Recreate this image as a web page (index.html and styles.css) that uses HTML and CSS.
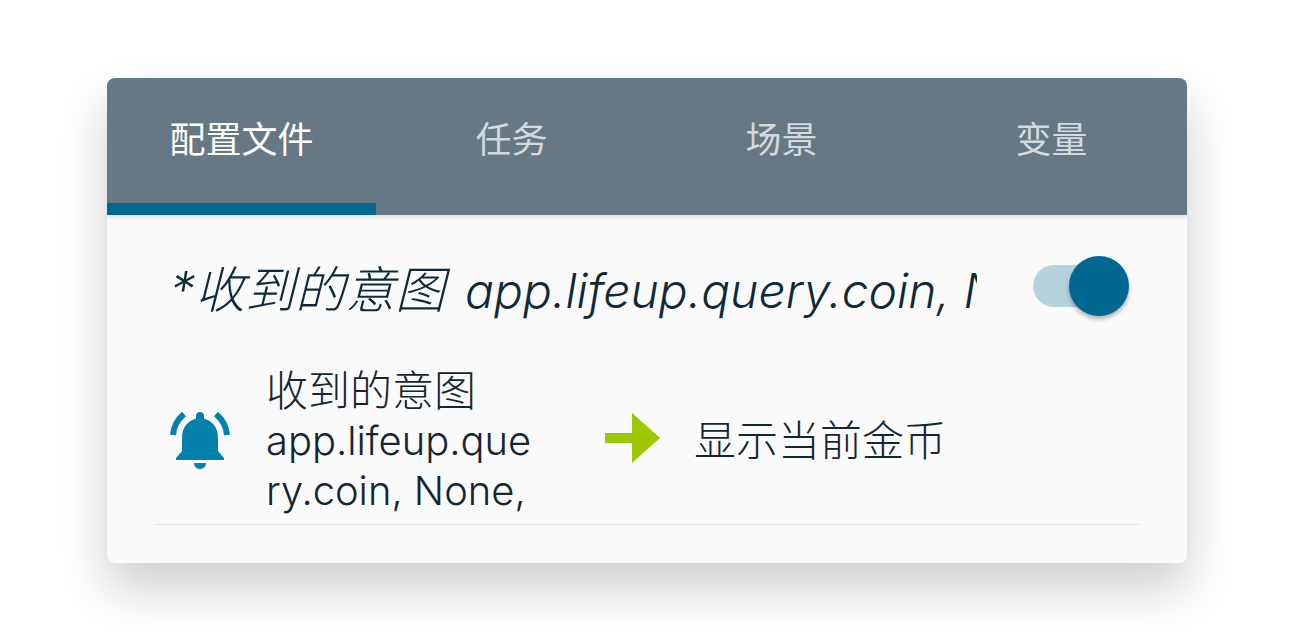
FILE: index.html
```html
<!DOCTYPE html>
<html lang="zh-CN">
<head>
    <meta charset="UTF-8">
    <meta name="viewport" content="width=device-width, initial-scale=1.0">
    <title>Tasker</title>
    <link rel="stylesheet" href="styles.css">
</head>
<body>

<div class="card">
    <div class="tabs">
        <div class="tab active">配置文件</div>
        <div class="tab">任务</div>
        <div class="tab">场景</div>
        <div class="tab">变量</div>
    </div>
    <div class="content">
        <div class="profile-head">
            <div class="profile-name">*收到的意图 <span class="latin">app.lifeup.query.coin, None,</span></div>
            <div class="switch">
                <div class="switch-track"></div>
                <div class="switch-thumb"></div>
            </div>
        </div>
        <div class="profile-row">
            <svg class="bell" viewBox="0 0 60 60">
                <path fill="#0582ac" d="M30 1a4 4 0 0 1 4 4v2.500C43 10 48 17 48 27v13l6 7v2H6v-2l6-7V27C12 17 17 10 26 7.500V5a4 4 0 0 1 4-4zM24 52h12c0 3.500-2.500 6-6 6s-6-2.500-6-6z"/>
                <path fill="none" stroke="#0582ac" stroke-width="6" d="M3 24c.5-8 4-15 11-21M57 24c-.5-8-4-15-11-21"/>
            </svg>
            <div class="trigger">收到的意图 <span class="latin">app.lifeup.query.coin, None,</span></div>
            <svg class="arrow" viewBox="0 0 56 52">
                <path fill="#9bc800" d="M0 21h27V1l28 25-28 25V31H0z"/>
            </svg>
            <div class="action">显示当前金币</div>
        </div>
        <div class="divider"></div>
    </div>
</div>

</body>
</html>
```

FILE: styles.css
```css
* {
    margin: 0;
    padding: 0;
    box-sizing: border-box;
}
body {
    font-family: 'Inter', 'Noto Sans CJK SC', sans-serif;
    background-color: #fff;
    height: 641px;
    padding: 78px 107px 0;
    overflow: hidden;
}
.card {
    width: 1080px;
    height: 485px;
    background-color: #fafafa;
    border-radius: 8px;
    box-shadow: 0 25px 50px rgba(0, 0, 0, 0.2);
    overflow: hidden;
}
.tabs {
    display: flex;
    height: 137px;
    background-color: #667884;
    box-shadow: 0 2px 4px rgba(0, 0, 0, 0.12);
}
.tab {
    flex: 1;
    height: 137px;
    padding-top: 36px;
    padding-right: 1px;
    text-align: center;
    font-size: 36px;
    line-height: 52px;
    font-weight: 400;
    color: rgba(255, 255, 255, 0.72);
}
.tab.active {
    color: #fff;
    background: linear-gradient(#006890, #006890) no-repeat 0 100% / 269px 12px;
}
.content {
    padding: 0 48px;
}
.latin {
    font-size: 0.95em;
}
.profile-head {
    display: flex;
    align-items: center;
    height: 147px;
}
.profile-name {
    width: 807px;
    margin-left: 15px;
    margin-top: 4px;
    font-size: 50px;
    line-height: 60px;
    font-style: italic;
    font-weight: 300;
    color: #0e2a38;
    white-space: nowrap;
    overflow: hidden;
}
.profile-name .latin {
    font-size: 48px;
    margin-left: 6px;
}
.switch {
    position: relative;
    width: 96px;
    height: 60px;
    margin-left: 56px;
    margin-top: -5px;
}
.switch-track {
    position: absolute;
    left: 0;
    top: 9px;
    width: 66px;
    height: 42px;
    border-radius: 21px;
    background-color: #b6d2de;
}
.switch-thumb {
    position: absolute;
    left: 36px;
    top: 0;
    width: 60px;
    height: 60px;
    border-radius: 50%;
    background-color: #006890;
    box-shadow: 0 3px 4px rgba(0, 0, 0, 0.3);
}
.profile-row {
    display: flex;
    align-items: center;
    height: 158px;
    margin-bottom: 4px;
    padding-left: 15px;
}
.bell {
    width: 60px;
    height: 60px;
    flex-shrink: 0;
}
.trigger {
    width: 272px;
    margin-left: 36px;
    margin-top: -2px;
    font-size: 42px;
    line-height: 49px;
    font-weight: 300;
    color: #14262f;
    overflow-wrap: anywhere;
}
.arrow {
    width: 56px;
    height: 52px;
    flex-shrink: 0;
    margin-left: 67px;
    margin-top: -6px;
}
.action {
    margin-left: 33px;
    margin-top: -2px;
    font-size: 42px;
    line-height: 49px;
    font-weight: 300;
    color: #14262f;
}
.divider {
    height: 1px;
    background-color: #dfdfdf;
}
```
